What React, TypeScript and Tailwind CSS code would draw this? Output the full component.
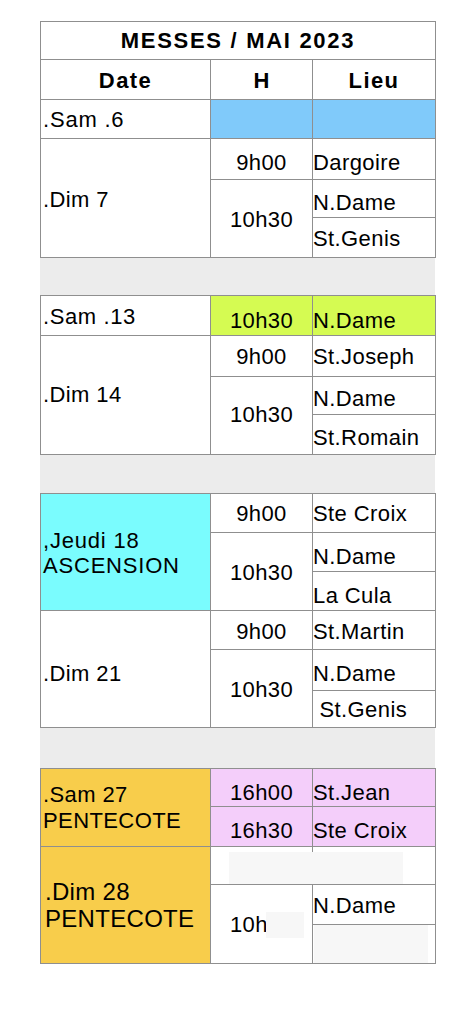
import React from "react";

const B = "border-r border-b border-[#8f8f8f]";
const txt = "text-[22px] leading-[26px] text-black tracking-[0.4px]";

type CellProps = {
  children?: React.ReactNode;
  cls?: string;
  bg?: string;
};

function DateCell({ children, cls = "", bg = "bg-white" }: CellProps) {
  return <div className={`${B} ${bg} ${txt} flex items-center pl-[2px] ${cls}`}>{children}</div>;
}
function TimeCell({ children, cls = "", bg = "bg-white" }: CellProps) {
  return <div className={`${B} ${bg} ${txt} flex items-center justify-center ${cls}`}>{children}</div>;
}
function LieuCell({ children, cls = "", bg = "bg-white" }: CellProps) {
  return <div className={`${B} ${bg} ${txt} flex items-center pl-0 whitespace-pre ${cls}`}>{children}</div>;
}

function Grey({ h }: { h: string }) {
  return <div className={`w-[395px] bg-[#ececec] ${h}`} />;
}

export default function App() {
  return (
    <div
      className="min-h-[1024px] w-[469px] bg-white pt-[21px] pl-[40px]"
      style={{ fontFamily: '"Liberation Sans", Arial, sans-serif' }}
    >
      {/* Block 1 */}
      <div className="grid grid-cols-[170px_102px_123px] grid-rows-[38px_40px_39px_41px_38px_40px] w-[396px] border-l border-t border-[#8f8f8f]">
        <div className={`${B} col-span-3 flex items-center justify-center font-bold text-[22px] tracking-[1.7px] bg-white`}>
          MESSES / MAI 2023
        </div>
        <div className={`${B} flex items-center justify-center font-bold text-[22px] tracking-[1.4px] pt-[2px]`}>Date</div>
        <div className={`${B} flex items-center justify-center font-bold text-[22px] pt-[2px]`}>H</div>
        <div className={`${B} flex items-center justify-center font-bold text-[22px] tracking-[1.4px] pt-[2px]`}>Lieu</div>
        <DateCell cls="pt-[2px] tracking-[0.8px]">.Sam .6</DateCell>
        <TimeCell bg="bg-[#80cafa]" />
        <LieuCell bg="bg-[#80cafa]" />
        <DateCell cls="row-span-3 pt-[3px]">.Dim 7</DateCell>
        <TimeCell cls="pt-[7px]">9h00</TimeCell>
        <LieuCell cls="pt-[7px]">Dargoire</LieuCell>
        <TimeCell cls="row-span-2 pt-[3px]">10h30</TimeCell>
        <LieuCell cls="pt-[8px]">N.Dame</LieuCell>
        <LieuCell cls="pt-[3px]">St.Genis</LieuCell>
      </div>
      <Grey h="h-[37px]" />

      {/* Block 2 */}
      <div className="grid grid-cols-[170px_102px_123px] grid-rows-[40px_41px_38px_40px] w-[396px] border-l border-t border-[#8f8f8f]">
        <DateCell cls="pt-[2px] tracking-[0.6px]">.Sam .13</DateCell>
        <TimeCell bg="bg-[#d5fb52]" cls="pt-[10px]">10h30</TimeCell>
        <LieuCell bg="bg-[#d5fb52]" cls="pt-[10px]">N.Dame</LieuCell>
        <DateCell cls="row-span-3">.Dim 14</DateCell>
        <TimeCell cls="pt-[2px]">9h00</TimeCell>
        <LieuCell cls="pt-[2px]">St.Joseph</LieuCell>
        <TimeCell cls="row-span-2 pb-[2px]">10h30</TimeCell>
        <LieuCell cls="pt-[7px]">N.Dame</LieuCell>
        <LieuCell cls="pt-[7px]">St.Romain</LieuCell>
      </div>
      <Grey h="h-[38px]" />

      {/* Block 3 */}
      <div className="grid grid-cols-[170px_102px_123px] grid-rows-[39px_39px_39px_39px_41px_37px] w-[396px] border-l border-t border-[#8f8f8f]">
        <DateCell bg="bg-[#7afcfe]" cls="row-span-3 pl-[1px]">
          <div className="leading-[25px] tracking-[0.8px] pt-[2px]">
            ,Jeudi 18
            <br />
            ASCENSION
          </div>
        </DateCell>
        <TimeCell cls="pt-[2px]">9h00</TimeCell>
        <LieuCell cls="pt-[2px]">Ste Croix</LieuCell>
        <TimeCell cls="row-span-2 pt-[3px]">10h30</TimeCell>
        <LieuCell cls="pt-[9px]">N.Dame</LieuCell>
        <LieuCell cls="pt-[9px]">La Cula</LieuCell>
        <DateCell cls="row-span-3 pt-[9px]">.Dim 21</DateCell>
        <TimeCell cls="pt-[4px]">9h00</TimeCell>
        <LieuCell cls="pt-[4px]">St.Martin</LieuCell>
        <TimeCell cls="row-span-2 pt-[2px]">10h30</TimeCell>
        <LieuCell cls="pt-[8px]">N.Dame</LieuCell>
        <LieuCell cls="pt-[2px]">{"\u00a0St.Genis"}</LieuCell>
      </div>
      <Grey h="h-[40px]" />

      {/* Block 4 */}
      <div className="relative grid grid-cols-[170px_102px_123px] grid-rows-[38px_40px_38px_40px_39px] w-[396px] border-l border-t border-[#8f8f8f]">
        <DateCell bg="bg-[#f8cd4b]" cls="row-span-2 pl-[1px]">
          <div className="leading-[26px] tracking-[0.4px] pt-[1px]">
            .Sam 27
            <br />
            PENTECOTE
          </div>
        </DateCell>
        <TimeCell bg="bg-[#f4cefa]" cls="pt-[10px]">16h00</TimeCell>
        <LieuCell bg="bg-[#f4cefa]" cls="pt-[10px]">St.Jean</LieuCell>
        <TimeCell bg="bg-[#f4cefa]" cls="pt-[8px]">16h30</TimeCell>
        <LieuCell bg="bg-[#f4cefa]" cls="pt-[8px]">Ste Croix</LieuCell>
        <DateCell bg="bg-[#f8cd4b]" cls="row-span-3 pl-[4px]">
          <div className="text-[24px] leading-[27px] tracking-[0.3px]">
            .Dim 28
            <br />
            PENTECOTE
          </div>
        </DateCell>
        <TimeCell />
        <LieuCell />
        <TimeCell cls="row-span-2 pt-[2px] relative">
          <span>10h30</span>
          <span className="absolute left-[55px] top-[27px] h-[26px] w-[38px] bg-[#f7f7f7]" />
        </TimeCell>
        <LieuCell cls="pt-[3px]">N.Dame</LieuCell>
        <LieuCell cls="relative">
          <span className="absolute left-[1px] top-0 h-[38px] w-[114px] bg-[#f7f7f7]" />
        </LieuCell>
        <span className="absolute left-[188px] top-[83px] h-[32px] w-[174px] bg-[#f7f7f7]" />
      </div>
    </div>
  );
}
